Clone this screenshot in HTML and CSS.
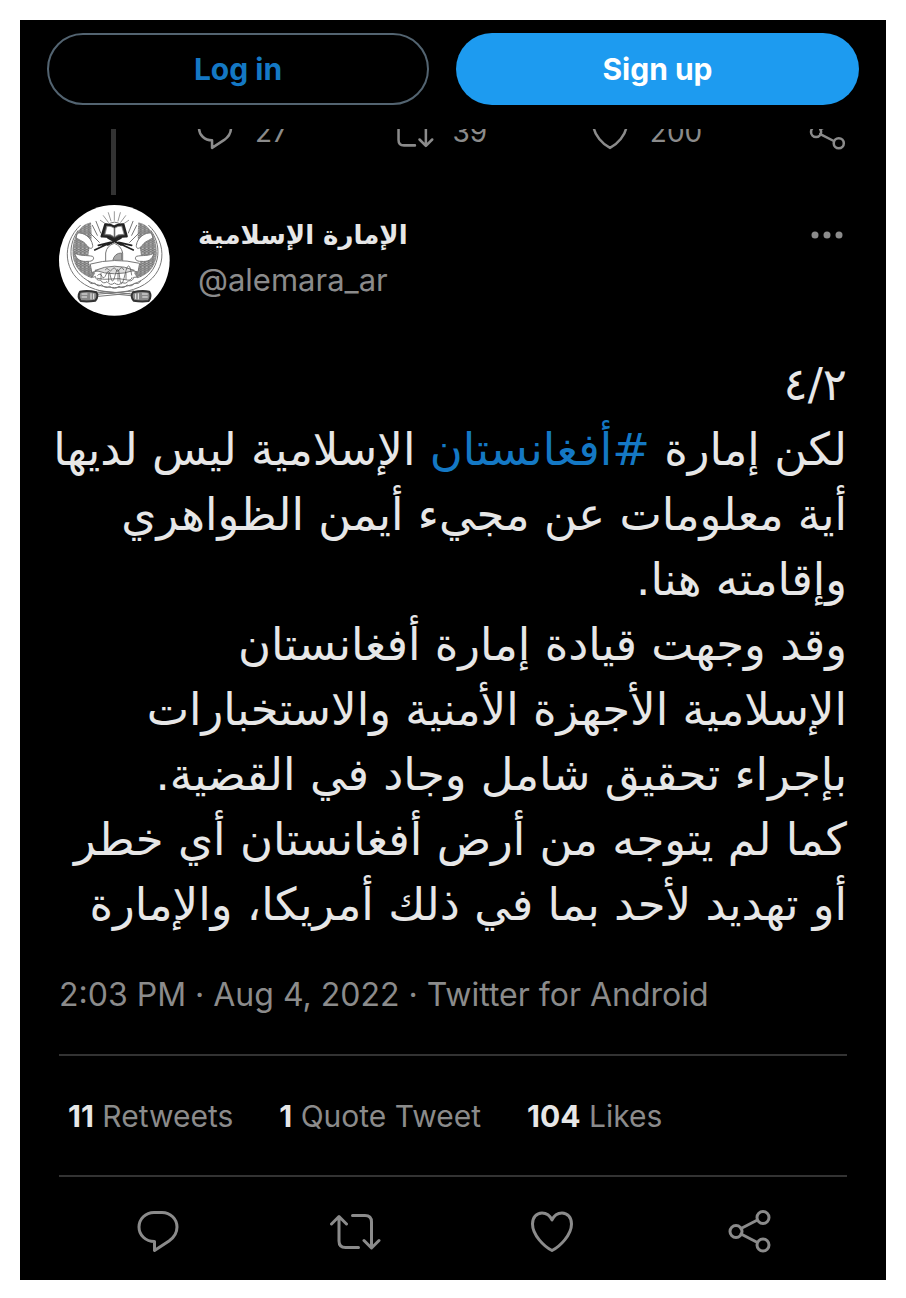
FILE: index.html
```
<!DOCTYPE html>
<html lang="en">

<head>
    <meta charset="utf-8">
    <meta name="viewport" content="width=device-width, initial-scale=1">
    <title>Tweet</title>
    <link rel="stylesheet" href="styles.css">
</head>

<body>

    <!-- Shared icons -->
    <svg class="icon-defs" aria-hidden="true">
        <symbol id="icon-reply" viewBox="-26 -22 52 44">
            <path d="M-4 -18.5H4C12.500 -18.500 19 -12 19 -4C19 2 16 6.500 11 10L-3.500 19.500V10.500C-12.500 10.500 -19 4 -19 -4C-19 -12 -12.500 -18.500 -4 -18.500Z" />
        </symbol>
        <symbol id="icon-retweet" viewBox="-26 -22 52 44">
            <path d="M-23.500 -7L-16 -14.500L-8.500 -7M-16 -14V10Q-16 16.500 -9.500 16.500H3.500M-2.500 -15.500H10Q16.500 -15.500 16.500 -9V16M9 9.500L16.500 17L24 9.500" />
        </symbol>
        <symbol id="icon-like" viewBox="-26 -22 52 44">
            <path d="M0 -11C-2 -15.500 -6 -18 -10 -18C-15.500 -18 -19.500 -13.500 -19.500 -7C-19.500 4 -8 15.500 0 19.500C8 15.500 19.500 4 19.500 -7C19.500 -13.500 15.500 -18 10 -18C6 -18 2 -15.500 0 -11Z" />
        </symbol>
        <symbol id="icon-share" viewBox="-26 -22 52 44">
            <path d="M-8 -2.500L7.500 -10.500M-8 3L7.500 11" />
            <circle cx="-13" cy="0.500" r="6" />
            <circle cx="14" cy="-13.500" r="6" />
            <circle cx="14" cy="14" r="6" />
        </symbol>
    </svg>

    <main class="page">
        <header class="top-bar">
            <button type="button" class="btn btn-login">Log in</button>
            <button type="button" class="btn btn-signup">Sign up</button>
        </header>

        <div class="thread">
            <div class="thread-line"></div>
            <div class="thread-actions">
                <button type="button" class="mini-action"><svg><use href="#icon-reply" /></svg><span>27</span></button>
                <button type="button" class="mini-action"><svg><use href="#icon-retweet" /></svg><span>39</span></button>
                <button type="button" class="mini-action"><svg><use href="#icon-like" /></svg><span>200</span></button>
                <button type="button" class="mini-action" aria-label="Share"><svg><use href="#icon-share" /></svg></button>
            </div>
        </div>

        <article class="tweet">
            <div class="author">
                <svg class="avatar" viewBox="25 30 333 333" aria-hidden="true">
                    <defs>
                        <pattern id="grain" width="12" height="14" patternUnits="userSpaceOnUse">
                            <rect width="12" height="14" fill="#bbb" />
                            <path d="M0 0L6 8L12 0M0 8L6 15L12 8M6 0V14" fill="none" stroke="#555" stroke-width="2" />
                        </pattern>
                    </defs>
                    <circle cx="191" cy="196" r="166" fill="#fff" />
                    <g fill="none" stroke="#777" stroke-width="3" stroke-linecap="round" stroke-linejoin="round">
                        <!-- sun rays -->
                        <path stroke="#999" d="M191 76V50M181 78L173 53M202 78L209 53M173 82L158 62M210 82L225 62M167 88L149 76M216 88L234 76" />
                        <path d="M170 91Q191 71 213 91" />
                        <!-- wheat wreath -->
                        <path fill="url(#grain)" stroke="none" d="M121 82C82 91 64 132 66 180C69 215 91 239 124 250L134 234C108 211 111 180 118 153C126 128 122 104 121 82Z" />
                        <path fill="url(#grain)" stroke="none" d="M263 82C302 91 320 132 318 180C315 215 293 239 260 250L250 234C276 211 273 180 266 153C258 128 262 104 263 82Z" />
                        <path d="M89 91C31 145 35 238 116 276C165 298 218 298 267 276C350 237 352 145 294 91M82 107C45 158 55 231 121 262C168 283 216 283 261 262C327 231 338 158 301 107" />
                        <path d="M125 91L140 121M136 79L150 114M117 113L146 142M258 91L243 121M247 79L233 114M266 113L237 142" />
                        <!-- ribbons -->
                        <path fill="#fff" d="M81 114C98 111 123 127 126 151C127 164 116 162 108 151C99 137 89 139 77 128ZM301 114C284 111 260 127 257 151C256 164 267 162 275 151C284 137 294 139 306 128ZM72 174C86 184 108 180 126 184C133 191 126 200 112 199C91 201 77 195 72 174ZM310 174C297 184 275 180 257 184C250 191 257 200 271 199C292 201 305 195 310 174Z" />
                        <!-- book on its stand -->
                        <path stroke="#222" stroke-width="7" fill="#444" d="M164 88L153 124Q178 123 191 135Q205 123 228 124L218 88Q200 87 191 95Q180 87 164 88Z" />
                        <path stroke="#888" stroke-width="2" fill="#fff" d="M169 94L163 118Q180 116 190 125V99Q181 92 169 94ZM213 94L220 118Q202 116 193 125V99Q202 92 213 94Z" />
                        <path stroke="#222" stroke-width="5" d="M132 165L190 138L248 165M143 151L179 142M204 142L243 151M172 129L211 150M211 129L171 150" />
                        <path fill="#fff" d="M165 199V174Q168 152 191 145Q212 153 216 174V199" />
                        <path fill="#aaa" d="M187 194Q192 174 213 174V194Z" />
                        <!-- banner -->
                        <path fill="#fff" d="M120 207Q191 187 267 205L262 231Q191 209 124 232Z" />
                        <path fill="#ddd" d="M134 226Q191 201 251 226Q191 247 134 226Z" />
                        <path stroke="#444" stroke-width="2" d="M164 224Q169 216 174 224T185 223T196 224T207 223T219 224M141 241Q149 232 154 244T167 237T180 246T194 239T207 247T223 238T243 240M140 250Q160 255 183 252T224 254T244 248M151 235V253M174 236V260M202 235V258M226 235V253" />
                        <path d="M116 240Q127 251 134 244Q137 258 149 255Q158 269 169 260Q180 274 191 264Q205 274 214 262Q226 269 234 257Q246 260 249 247Q260 250 268 239" />
                        <path d="M113 258Q120 270 132 264Q142 278 153 269Q165 283 177 274Q191 286 205 274Q218 283 229 270Q243 277 251 265Q264 269 271 258" />
                        <!-- crossed swords -->
                        <path d="M136 298L249 288M136 291L249 303M144 304L238 295M143 287L240 297" />
                        <path stroke="#333" stroke-width="6" fill="#888" d="M88 290Q111 285 137 292Q145 302 134 317Q110 321 90 318Q79 304 88 290ZM247 292Q274 285 296 290Q304 304 294 318Q272 321 249 317Q238 302 247 292Z" />
                        <path stroke="#eee" stroke-width="3" d="M94 297H109M94 306H108M121 296V312M129 297V311M275 297H290M276 306H290M255 297V311M263 296V312" />
                    </g>
                </svg>
                <div class="names">
                    <a href="#" class="display-name" lang="ar" dir="rtl">الإمارة الإسلامية</a>
                    <a href="#" class="handle">@alemara_ar</a>
                </div>
                <button type="button" class="more" aria-label="More">
                    <svg viewBox="0 0 34 10"><circle cx="5" cy="5" r="3.500" /><circle cx="17" cy="5" r="3.500" /><circle cx="29" cy="5" r="3.500" /></svg>
                </button>
            </div>

            <p class="tweet-text" lang="ar" dir="rtl">٤/٢<br>
                لكن إمارة <a href="#">#أفغانستان</a> الإسلامية ليس لديها<br>
                أية معلومات عن مجيء أيمن الظواهري<br>
                وإقامته هنا.<br>
                وقد وجهت قيادة إمارة أفغانستان<br>
                الإسلامية الأجهزة الأمنية والاستخبارات<br>
                بإجراء تحقيق شامل وجاد في القضية.<br>
                كما لم يتوجه من أرض أفغانستان أي خطر<br>
                أو تهديد لأحد بما في ذلك أمريكا، والإمارة</p>

            <div class="meta">2:03 PM · Aug 4, 2022 · Twitter for Android</div>

            <div class="stats">
                <a href="#"><strong>11</strong> Retweets</a>
                <a href="#"><strong>1</strong> Quote Tweet</a>
                <a href="#"><strong>104</strong> Likes</a>
            </div>

            <div class="actions">
                <button type="button" aria-label="Reply"><svg><use href="#icon-reply" /></svg></button>
                <button type="button" aria-label="Retweet"><svg><use href="#icon-retweet" /></svg></button>
                <button type="button" aria-label="Like"><svg><use href="#icon-like" /></svg></button>
                <button type="button" aria-label="Share"><svg><use href="#icon-share" /></svg></button>
            </div>
        </article>
    </main>

</body>

</html>
```
FILE: styles.css
```
* {
    box-sizing: border-box;
}

body {
    margin: 0;
    padding: 20px 20px 18px;
    background-color: #fff;
    font-family: Inter, Roboto, sans-serif;
    color: #8b8b8b;
}

a {
    color: inherit;
    text-decoration: none;
}

button {
    padding: 0;
    border: none;
    background: none;
    color: inherit;
    font-family: inherit;
    cursor: pointer;
}

svg {
    display: block;
}

.icon-defs {
    display: none;
}

.page {
    background-color: #000;
}

.top-bar {
    display: flex;
    gap: 27px;
    padding: 13px 27px 24px;
}

.btn {
    height: 72px;
    border-radius: 36px;
    font-size: 30px;
    font-weight: 700;
}

.btn-login {
    flex: 378;
    border: 2px solid #536471;
    color: #1478c4;
}

.btn-signup {
    flex: 403;
    background-color: #1d9bf0;
    color: #fff;
}

/* Bottom of the previous tweet, cut off by the top bar */
.thread {
    display: flex;
    gap: 24px;
    height: 76px;
    padding: 0 37px 0 38px;
}

.thread-line {
    width: 5px;
    height: 66px;
    margin: 0 53px;
    background-color: #333;
}

.thread-actions {
    flex: 1;
    display: grid;
    grid-template-columns: 10fr 10fr 11fr auto;
    align-content: end;
    height: 21px;
    overflow: hidden;
}

.mini-action {
    display: flex;
    align-items: center;
    gap: 18px;
    height: 37px;
    font-size: 28px;
}

.mini-action svg {
    width: 44px;
    height: 37px;
}

.mini-action svg,
.actions svg {
    fill: none;
    stroke: #8b8b8b;
    stroke-width: 3;
    stroke-linecap: round;
    stroke-linejoin: round;
}

.tweet {
    padding: 0 39px;
}

.author {
    display: flex;
    gap: 28px;
}

.avatar {
    width: 111px;
    height: 111px;
}

.names {
    display: flex;
    flex-direction: column;
    align-items: flex-start;
    flex: 1;
    padding-top: 8px;
}

.display-name {
    font-family: "DejaVu Sans", sans-serif;
    font-size: 26px;
    font-weight: 700;
    line-height: 44px;
    color: #e7e7e7;
}

.handle {
    font-size: 31px;
    line-height: 46px;
}

.more {
    align-self: flex-start;
    padding: 25px 3px;
}

.more svg {
    width: 34px;
    height: 10px;
    fill: #8b8b8b;
}

.tweet-text {
    margin: 36px 0;
    font-family: "DejaVu Sans", sans-serif;
    font-size: 45px;
    line-height: 65px;
    color: #e7e7e7;
    white-space: nowrap;
}

.tweet-text a {
    color: #1478c4;
}

.meta {
    padding-bottom: 37px;
    border-bottom: 2px solid #333;
    font-size: 32px;
    line-height: 44px;
}

.stats {
    display: flex;
    gap: 46px;
    padding: 38px 9px 37px;
    border-bottom: 2px solid #333;
    font-size: 30px;
    line-height: 44px;
}

.stats strong {
    color: #e7e7e7;
}

.actions {
    display: flex;
    justify-content: space-around;
    padding: 32px 0 27px;
}

.actions svg {
    width: 52px;
    height: 44px;
}
```
